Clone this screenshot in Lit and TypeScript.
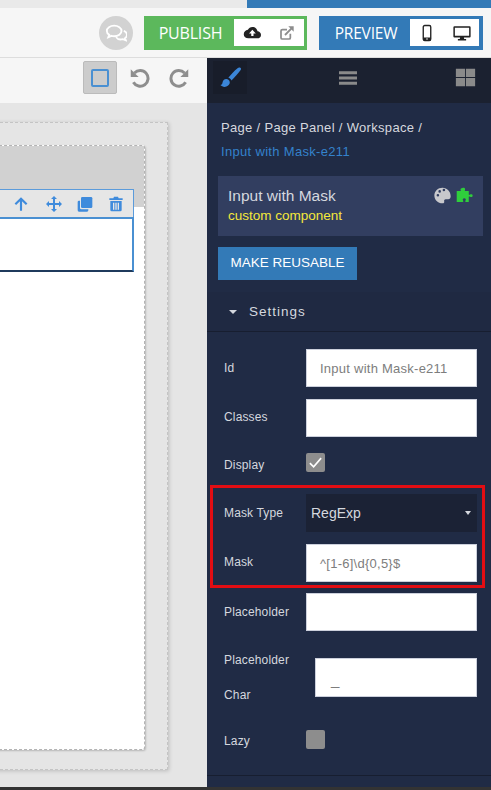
import { LitElement, css, html, svg } from "lit";
import { customElement } from "lit/decorators.js";

const icon = (box: string, body: unknown, cls = "") =>
  html`<svg class=${cls} viewBox=${box} aria-hidden="true">${body}</svg>`;

const icons = {
  comments: svg`<path fill="none" stroke="currentColor" stroke-width="2" d="M10 4c-4.400 0-8 2.500-8 5.700 0 1.700 1 3.200 2.600 4.300l-1 2.600 3.400-1.500c1 .3 2 .4 3 .4 4.400 0 8-2.600 8-5.800S14.400 4 10 4z"/><path fill="none" stroke="currentColor" stroke-width="2" d="M20.500 9.500c2 1 3.500 2.500 3.500 4.500 0 1.500-.9 2.800-2.200 3.700l.9 2.300-3.200-1.300c-2.800.7-6.200-.2-7.500-2.200"/>`,
  cloud: svg`<path fill="currentColor" d="M19.400 9.600C18.800 6.400 16 4 12.600 4c-2.700 0-5 1.500-6.100 3.700C3.500 8 1 10.500 1 13.600 1 16.900 3.700 19 7 19h12c2.800 0 5-1.700 5-4.500 0-2.600-2-4.700-4.600-4.900z"/><path fill="#fff" d="M12.500 7.500 17 12.500h-3V16h-3v-3.500H8z"/>`,
  external: svg`<path fill="none" stroke="currentColor" stroke-width="2.600" d="M17 13v6a2 2 0 0 1-2 2H5a2 2 0 0 1-2-2V9a2 2 0 0 1 2-2h7"/><path fill="none" stroke="currentColor" stroke-width="2.800" d="M9 15 20 4"/><path fill="currentColor" d="M14 2h8v8z"/>`,
  mobile: svg`<path fill="none" stroke="currentColor" stroke-width="1.800" d="M9 2h6a2 2 0 0 1 2 2v16a2 2 0 0 1-2 2H9a2 2 0 0 1-2-2V4a2 2 0 0 1 2-2z"/><path fill="currentColor" d="M7 18h10v4H7z"/><circle cx="12" cy="20" r="1" fill="#fff"/>`,
  desktop: svg`<path fill="currentColor" fill-rule="evenodd" d="M2 3h20a1.500 1.500 0 0 1 1.500 1.500v12A1.500 1.500 0 0 1 22 18h-7.500l.5 2h2.500v2h-11v-2H9l.5-2H2A1.500 1.500 0 0 1 .500 16.500v-12A1.500 1.500 0 0 1 2 3zm.500 2v10.500h19V5z"/>`,
  undo: svg`<path fill="none" stroke="currentColor" stroke-width="3.400" d="M6.200 6.800A9 9 0 1 1 5 17.500"/><path fill="currentColor" d="M2 2.500 11 11.500H2z"/>`,
  redo: svg`<path fill="none" stroke="currentColor" stroke-width="3.400" d="M17.800 6.800A9 9 0 1 0 19 17.500"/><path fill="currentColor" d="M22 2.500 13 11.500h9z"/>`,
  brush: svg`<path fill="currentColor" d="M23.500 1c-1-.8-2.500-.5-3.800.6-3.500 3-7.500 7-10.200 10.800 1.500.3 3 1.500 3.600 3.100 3.500-3.400 8-8.600 10.500-12 .6-.9.700-1.800-.1-2.500zM7.200 13.700c-2.500.2-4 1.800-4.300 4-.2 1.600-1 2.600-2.400 3 1.600 1.800 4.300 2.500 6.800 1.700 3-1 4.400-3.400 3.700-5.800-.5-1.800-2-3-3.800-2.900z"/>`,
  bars: svg`<path fill="currentColor" d="M0 3h24v4H0zM0 10h24v4H0zM0 17h24v4H0z"/>`,
  grid: svg`<path fill="currentColor" d="M1 2h10.500v9.500H1zM12.500 2H23v9.500H12.500zM1 12.500h10.500V22H1zM12.500 12.500H23V22H12.500z"/>`,
  palette: svg`<path fill="currentColor" fill-rule="evenodd" d="M12 1C5.500 1 .500 5.800.500 12S5.500 23 12 23c2 0 2.800-1.300 2.400-2.700-.4-1.500.2-3 2.100-3h3.500c2.200 0 3.500-1.700 3.500-4.300C23.500 6 18.500 1 12 1zM5.500 13.500a1.800 1.800 0 1 1 0-3.600 1.800 1.800 0 0 1 0 3.600zM8 8a1.800 1.800 0 1 1 0-3.600A1.800 1.800 0 0 1 8 8zm6-2a1.800 1.800 0 1 1 0-3.600A1.800 1.800 0 0 1 14 6z"/>`,
  puzzle: svg`<path fill="currentColor" d="M9 1.500c2-.8 4.200.2 3.800 2-.2.800-.5 1.200-.3 2 .1.300 3.500.4 5.500.2v5c.3.800 1.200.5 2 0 1.500-.8 3.500-.2 3.500 1.600 0 1.900-2 2.400-3.500 1.600-.8-.5-1.700-.7-2 0V21h-4.500c-.7-.4-.5-1.100 0-1.800.9-1.300.2-3.200-1.800-3.200s-2.700 1.900-1.800 3.200c.5.700.7 1.400 0 1.800H1V5.700h5.500c.5-.4.300-1.200-.1-2-.4-.8.700-1.700 2.600-2.200z"/>`,
  up: svg`<path fill="none" stroke="currentColor" stroke-width="3.200" d="M12 22V4M3.500 12.500 12 4l8.500 8.500"/>`,
  move: svg`<path fill="currentColor" d="M12 0l4.500 4.500H13.500V10.500H19.500V7.500L24 12l-4.500 4.500v-3H13.500v6h3L12 24l-4.500-4.500h3v-6h-6v3L0 12l4.500-4.500v3h6v-6h-3z"/>`,
  copy: svg`<path fill="currentColor" d="M8 1.500h13a2 2 0 0 1 2 2V16a2 2 0 0 1-2 2H8a2 2 0 0 1-2-2V3.500a2 2 0 0 1 2-2z"/><path fill="currentColor" d="M1 9a2 2 0 0 1 2-2h1.500v11a2 2 0 0 0 2 2H17v1.500a2 2 0 0 1-2 2H3a2 2 0 0 1-2-2z"/>`,
  trash: svg`<path fill="currentColor" fill-rule="evenodd" d="M9 1h6l1 2.500h6V6H2V3.500h6zM3.500 7.500h17V21a2 2 0 0 1-2 2h-13a2 2 0 0 1-2-2zM7.500 10v10.500h2V10zm3.500 0v10.500h2V10zm3.500 0v10.500h2V10z"/>`,
};

@customElement("app-root")
export class AppRoot extends LitElement {
  static styles = css`
    :host {
      display: flex;
      flex-direction: column;
      height: 790px;
      overflow: hidden;
      font-family: "Liberation Sans", Arial, sans-serif;
      background: #333;
    }
    svg {
      display: block;
      width: 18px;
      height: 18px;
    }

    .strip {
      display: flex;
      flex: none;
      height: 8px;
    }
    .strip .gray {
      width: 247px;
      background: #e9e9e9;
    }
    .strip .blue {
      flex: 1;
      background: #337ab7;
    }

    .topbar {
      display: flex;
      flex: none;
      align-items: center;
      justify-content: flex-end;
      height: 50px;
      padding-right: 8px;
      box-sizing: border-box;
      background: #f6f6f6;
      border-bottom: 1px solid #ddd;
    }
    .chat {
      display: flex;
      align-items: center;
      justify-content: center;
      width: 34px;
      height: 34px;
      margin-right: 11px;
      border-radius: 50%;
      background: #d2d2d2;
      color: #fff;
    }
    .chat svg {
      width: 22px;
      height: 22px;
    }
    .action {
      display: flex;
      align-items: center;
      height: 34px;
      box-sizing: border-box;
      padding: 3px;
      color: #fff;
      font-family: "Open Sans", sans-serif;
    }
    .action .name {
      flex: 1;
      text-align: center;
      letter-spacing: -0.2px;
    }
    .publish {
      width: 163px;
      background: #5cb85c;
      font-size: 16px;
    }
    .preview {
      width: 164px;
      margin-left: 12px;
      padding-right: 4px;
      background: #337ab7;
      font-size: 15.500px;
    }
    .modes {
      display: flex;
      align-items: center;
      justify-content: space-around;
      height: 27px;
      background: #fff;
    }
    .publish .modes {
      width: 70px;
    }
    .preview .modes {
      width: 69px;
    }
    .modes .cloud {
      color: #222;
    }
    .modes .external {
      color: #8d8d8d;
      width: 16px;
      height: 16px;
    }
    .modes .device {
      color: #222;
    }

    .main {
      display: flex;
      flex: 1;
      min-height: 0;
      margin-bottom: 3px;
    }

    .stage {
      display: flex;
      flex-direction: column;
      width: 207px;
      flex: none;
      overflow: hidden;
      background: #e5e5e5;
    }
    .tools {
      display: flex;
      flex: none;
      align-items: center;
      justify-content: flex-end;
      gap: 19px;
      height: 45px;
      padding: 0 17px 6px 0;
      box-sizing: border-box;
      background: #f6f6f6;
      color: #8e8e8e;
    }
    .tools svg {
      width: 21px;
      height: 21px;
    }
    .frame-btn {
      display: flex;
      align-items: center;
      justify-content: center;
      width: 34px;
      height: 33px;
      margin-right: -7px;
      background: #ccc;
      border: 1px solid #bbb;
      box-sizing: border-box;
      border-radius: 2px;
    }
    .frame-btn span {
      width: 14px;
      height: 14px;
      border: 2px solid #4a90d2;
      border-radius: 2px;
    }

    .workspace {
      width: 208px;
      height: 648px;
      margin: 19px 0 0 -40px;
      padding: 22px 22px 21px 40px;
      box-sizing: border-box;
      flex: none;
      border: 1px dashed #c4c4c4;
      background: #e5e5e5;
      box-shadow: 1px 1px 4px rgba(0, 0, 0, 0.18);
    }
    .page {
      display: flex;
      flex-direction: column;
      height: 100%;
      margin-left: -40px;
      border: 1px dashed #b4b4b4;
      border-radius: 3px;
      background: #fff;
      box-shadow: 1px 1px 2px rgba(0, 0, 0, 0.2);
    }
    .page-head {
      flex: none;
      height: 61px;
      background: #d1d1d1;
    }
    .comp {
      margin-right: 10px;
      margin-top: -18px;
    }
    .comp-tools {
      display: flex;
      align-items: center;
      justify-content: flex-end;
      gap: 15px;
      height: 28px;
      padding-right: 9px;
      box-sizing: border-box;
      background: #e6e6e6;
      border: 1px solid #5b9bdb;
      border-bottom: 0;
      color: #3f8bdc;
    }
    .comp-tools svg {
      width: 16px;
      height: 16px;
    }
    .comp-tools .up {
      margin-right: 2px;
    }
    .comp-box {
      height: 55px;
      box-sizing: border-box;
      background: #fff;
      border: 2px solid #4a90d2;
      border-bottom: 2px solid #1f3a5c;
    }

    .panel {
      display: flex;
      flex-direction: column;
      flex: 1;
      min-width: 0;
      background: #202b45;
      color: #d5d8df;
    }
    .tabs {
      display: flex;
      flex: none;
      align-items: center;
      justify-content: space-between;
      height: 45px;
      padding: 0 15px 6px 6px;
      box-sizing: border-box;
      background: #1b2130;
      color: #8a8a8a;
    }
    .tabs svg {
      width: 21px;
      height: 21px;
    }
    .tabs .active {
      display: flex;
      align-items: center;
      justify-content: center;
      width: 34px;
      height: 33px;
      background: #181d2a;
      color: #3b86d8;
    }
    .tabs .bars {
      width: 18px;
      height: 18px;
      margin-right: 6px;
    }
    .crumbs {
      padding: 13px 13px 0 14px;
      font-size: 13px;
      line-height: 24px;
      letter-spacing: 0.32px;
    }
    .crumbs a {
      display: block;
      color: #3482cc;
    }
    .card {
      display: flex;
      justify-content: space-between;
      height: 60px;
      margin: 12px 8px 0 11px;
      padding: 10px 9px 0 10px;
      box-sizing: border-box;
      background: #323e60;
    }
    .card .title {
      font-size: 15.500px;
      line-height: 20px;
    }
    .card .sub {
      font-size: 13.500px;
      line-height: 19px;
      color: #f4e83a;
    }
    .card .badges {
      display: flex;
      gap: 4px;
      padding-top: 1px;
    }
    .card .palette {
      width: 17px;
      height: 17px;
      color: #c8c8cc;
    }
    .card .puzzle {
      width: 19px;
      height: 17px;
      color: #2fce3c;
    }
    .reuse {
      display: block;
      width: 139px;
      height: 33px;
      margin: 11px 0 0 11px;
      padding: 0 0 3px;
      border: 0;
      background: #337ab7;
      color: #fff;
      font: 13.500px "Liberation Sans", Arial, sans-serif;
    }
    .section {
      display: flex;
      flex: none;
      align-items: center;
      height: 40px;
      margin-top: 12px;
      padding-left: 22px;
      box-sizing: border-box;
      background: #1f2942;
      border-bottom: 1px solid #171e30;
      font-size: 13.500px;
      letter-spacing: 1px;
    }
    .section i {
      width: 0;
      height: 0;
      margin-right: 12px;
      border: 4px solid transparent;
      border-top-color: #d5d8df;
      border-bottom: 0;
    }

    .fields {
      display: flex;
      flex-direction: column;
      flex: none;
      height: 444px;
      padding: 17px 14px 0 17px;
      box-sizing: border-box;
      border-bottom: 1px solid #171e30;
      font-size: 12px;
      letter-spacing: 0.15px;
    }
    .row {
      display: grid;
      grid-template-columns: 82px 171px;
      align-items: center;
      min-height: 38px;
      margin-bottom: 12px;
    }
    .box {
      display: flex;
      align-items: center;
      height: 38px;
      padding-left: 13px;
      box-sizing: border-box;
      background: #fff;
      border: 1px solid #ccd0dc;
      color: #7d7d7d;
      font-size: 13px;
      letter-spacing: 0.25px;
      white-space: nowrap;
    }
    .check {
      display: flex;
      align-items: center;
      justify-content: center;
      width: 19px;
      height: 19px;
      border-radius: 2px;
      background: #8d8d8d;
      color: #fff;
    }
    .check svg {
      width: 15px;
      height: 15px;
    }
    .label.low {
      padding-top: 4px;
    }
    .label.raised {
      margin-top: -2px;
    }
    .display {
      min-height: 19px;
      margin: 4px 0 6px;
    }
    .masked {
      height: 103px;
      margin: 7px -8px 5px -14px;
      padding: 6px 5px 3px 11px;
      box-sizing: border-box;
      border: 3px solid #e20d13;
    }
    .masked .row:last-child {
      margin-bottom: 0;
    }
    .select {
      justify-content: space-between;
      padding: 0 6px 0 5px;
      border: 0;
      background: #1b2235;
      color: #d5d8df;
      font-size: 14px;
      letter-spacing: 0;
    }
    .select i {
      width: 0;
      height: 0;
      border: 3.500px solid transparent;
      border-top: 4px solid #d5d8df;
      border-bottom: 0;
    }
    .char {
      grid-template-columns: 91px 162px;
      margin-top: -1px;
      margin-bottom: 7px;
    }
    .char .label {
      padding-top: 1px;
      line-height: 35px;
    }
    .char .box {
      height: 39px;
      padding: 3px 0 0 15px;
      font-size: 15px;
    }
  `;

  render() {
    return html`
      <div class="strip"><div class="gray"></div><div class="blue"></div></div>
      <header class="topbar">
        <div class="chat">${icon("0 0 24 24", icons.comments)}</div>
        <div class="action publish">
          <span class="name">PUBLISH</span>
          <div class="modes">
            ${icon("0 0 24 24", icons.cloud, "cloud")}
            ${icon("0 0 24 24", icons.external, "external")}
          </div>
        </div>
        <div class="action preview">
          <span class="name">PREVIEW</span>
          <div class="modes">
            ${icon("0 0 24 24", icons.mobile, "device")}
            ${icon("0 0 24 24", icons.desktop, "device")}
          </div>
        </div>
      </header>
      <div class="main">
        <section class="stage">
          <div class="tools">
            <div class="frame-btn"><span></span></div>
            ${icon("0 0 24 24", icons.undo)}
            ${icon("0 0 24 24", icons.redo)}
          </div>
          <div class="workspace">
            <div class="page">
              <div class="page-head"></div>
              <div class="comp">
                <div class="comp-tools">
                  ${icon("0 0 24 24", icons.up, "up")}
                  ${icon("0 0 24 24", icons.move)}
                  ${icon("0 0 24 24", icons.copy)}
                  ${icon("0 0 24 24", icons.trash)}
                </div>
                <div class="comp-box"></div>
              </div>
            </div>
          </div>
        </section>
        <aside class="panel">
          <nav class="tabs">
            <div class="active">${icon("0 0 24 24", icons.brush)}</div>
            ${icon("0 0 24 24", icons.bars, "bars")}
            ${icon("0 0 24 24", icons.grid)}
          </nav>
          <div class="crumbs">
            Page / Page Panel / Workspace /
            <a>Input with Mask-e211</a>
          </div>
          <div class="card">
            <div>
              <div class="title">Input with Mask</div>
              <div class="sub">custom component</div>
            </div>
            <div class="badges">
              ${icon("0 0 24 24", icons.palette, "palette")}
              ${icon("0 0 24 24", icons.puzzle, "puzzle")}
            </div>
          </div>
          <button class="reuse">MAKE REUSABLE</button>
          <div class="section"><i></i>Settings</div>
          <div class="fields">
            <div class="row">
              <span class="label">Id</span>
              <div class="box">Input with Mask-e211</div>
            </div>
            <div class="row">
              <span class="label raised">Classes</span>
              <div class="box"></div>
            </div>
            <div class="row display">
              <span class="label low">Display</span>
              <div class="check">
                ${icon("0 0 24 24", svg`<path fill="none" stroke="currentColor" stroke-width="2.600" d="M3 13l6 6L21 5"/>`)}
              </div>
            </div>
            <div class="masked">
              <div class="row">
                <span class="label">Mask Type</span>
                <div class="box select">RegExp<i></i></div>
              </div>
              <div class="row">
                <span class="label raised">Mask</span>
                <div class="box">^[1-6]\\d{0,5}$</div>
              </div>
            </div>
            <div class="row">
              <span class="label">Placeholder</span>
              <div class="box"></div>
            </div>
            <div class="row char">
              <span class="label">Placeholder Char</span>
              <div class="box">_</div>
            </div>
            <div class="row">
              <span class="label low">Lazy</span>
              <div class="check"></div>
            </div>
          </div>
        </aside>
      </div>
    `;
  }
}

declare global {
  interface HTMLElementTagNameMap {
    "app-root": AppRoot;
  }
}
